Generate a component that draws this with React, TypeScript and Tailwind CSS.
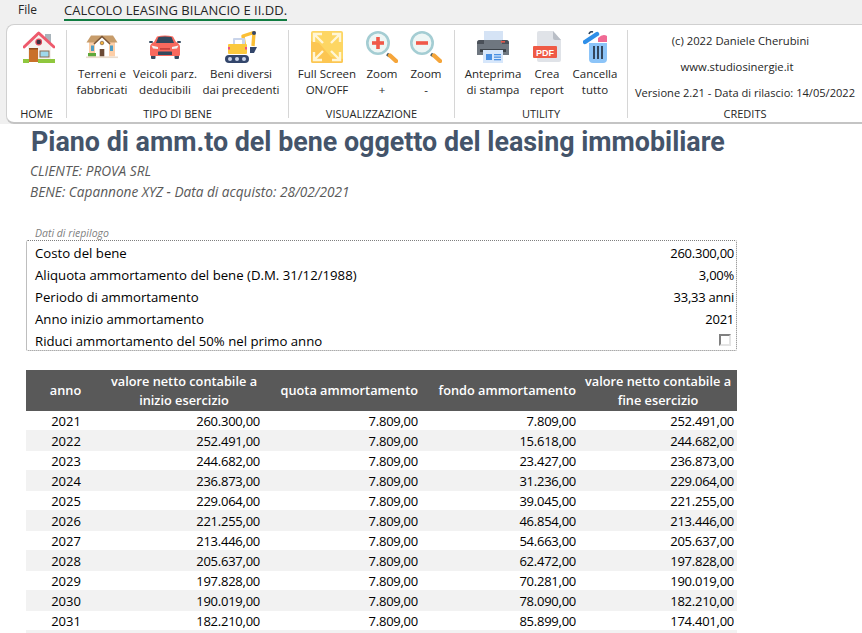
import type { ReactNode } from "react";

const rows = [
  ["2021", "260.300,00", "7.809,00", "7.809,00", "252.491,00"],
  ["2022", "252.491,00", "7.809,00", "15.618,00", "244.682,00"],
  ["2023", "244.682,00", "7.809,00", "23.427,00", "236.873,00"],
  ["2024", "236.873,00", "7.809,00", "31.236,00", "229.064,00"],
  ["2025", "229.064,00", "7.809,00", "39.045,00", "221.255,00"],
  ["2026", "221.255,00", "7.809,00", "46.854,00", "213.446,00"],
  ["2027", "213.446,00", "7.809,00", "54.663,00", "205.637,00"],
  ["2028", "205.637,00", "7.809,00", "62.472,00", "197.828,00"],
  ["2029", "197.828,00", "7.809,00", "70.281,00", "190.019,00"],
  ["2030", "190.019,00", "7.809,00", "78.090,00", "182.210,00"],
  ["2031", "182.210,00", "7.809,00", "85.899,00", "174.401,00"],
];

const summary = [
  ["Costo del bene", "260.300,00"],
  ["Aliquota ammortamento del bene (D.M. 31/12/1988)", "3,00%"],
  ["Periodo di ammortamento", "33,33 anni"],
  ["Anno inizio ammortamento", "2021"],
];

const HomeIcon = () => (
  <svg width="32" height="32" viewBox="0 0 32 32">
    <rect x="22" y="3" width="6" height="10" fill="#a9b4bb" />
    <path d="M15.7 2 L28 14 V31 H5 V14 Z" fill="#f5f1ee" />
    <rect x="6" y="17" width="9" height="14" fill="#c9702a" />
    <rect x="6" y="17" width="9" height="1.5" fill="#8f4a1c" />
    <rect x="17" y="20" width="9" height="6" fill="#9fd8ec" stroke="#8a6a50" />
    <rect x="0" y="28" width="6" height="4" fill="#8fc73e" />
    <rect x="15" y="28" width="17" height="4" fill="#8fc73e" />
    <path d="M1 16 L15.7 2 L31 16" fill="none" stroke="#ee5a6c" strokeWidth="3" strokeLinejoin="round" strokeLinecap="round" />
    <circle cx="15.7" cy="11" r="2.8" fill="#3b3140" stroke="#e0485a" strokeWidth="1.2" />
  </svg>
);

const HouseIcon = () => (
  <svg width="32" height="24" viewBox="0 0 32 24">
    <rect x="3" y="7" width="26" height="14.5" fill="#fdcfa8" />
    <path d="M5 0.5 H27 L31.5 7.5 H0.5 Z" fill="#c79c6a" />
    <path d="M16 1.5 L23 8 V21.5 H9 V8 Z" fill="#fff" />
    <path d="M8 9 L16 1.5 L24 9" fill="none" stroke="#7a5536" strokeWidth="1.6" />
    <circle cx="16" cy="8" r="1.8" fill="#f3b33a" stroke="#6b4a35" strokeWidth="0.6" />
    <rect x="13.7" y="14" width="4.6" height="7.5" fill="#6b4a35" />
    <rect x="5" y="10.5" width="3" height="5.5" fill="#4f9ec4" />
    <rect x="24" y="10.5" width="3" height="5.5" fill="#4f9ec4" />
    <rect x="2" y="18" width="8" height="3.5" fill="#5fa83c" />
    <rect x="0" y="21.5" width="32" height="1.6" fill="#eadccd" />
  </svg>
);

const CarIcon = () => (
  <svg width="32" height="24" viewBox="0 0 32 24">
    <rect x="2" y="19" width="4.5" height="5" rx="1" fill="#34495e" />
    <rect x="25.5" y="19" width="4.5" height="5" rx="1" fill="#34495e" />
    <rect x="0" y="6" width="4" height="2" rx="1" fill="#34495e" />
    <rect x="28" y="6" width="4" height="2" rx="1" fill="#34495e" />
    <path d="M8 1.5 Q16 -0.5 24 1.5 L27 7 Q31 9 31 12 V20 Q31 21 29 21 H3 Q1 21 1 20 V12 Q1 9 5 7 Z" fill="#f8695e" />
    <path d="M9.5 2 Q16 0.8 22.5 2 L25 8 H7 Z" fill="#34495e" />
    <path d="M2.5 10.5 L9 12 V14 L4 13.5 Z" fill="#f2f2f2" />
    <path d="M29.5 10.5 L23 12 V14 L28 13.5 Z" fill="#f2f2f2" />
    <rect x="11" y="13" width="10" height="1.8" fill="#c9433c" />
    <rect x="9" y="16.5" width="14" height="3.5" rx="0.6" fill="#34495e" />
  </svg>
);

const ExcavatorIcon = () => (
  <svg width="33" height="32" viewBox="0 0 33 32">
    <path d="M20 18 L18 5 L29 1.5 L28 15" fill="none" stroke="#fbbf35" strokeWidth="3.4" strokeLinejoin="round" />
    <circle cx="29" cy="2" r="2" fill="#33466b" />
    <path d="M25 16 H32 L29 22 H25 Z" fill="#33466b" />
    <rect x="8" y="7" width="12" height="9" rx="1" fill="#c9d4ea" />
    <rect x="10" y="9" width="7" height="6" fill="#fff" />
    <rect x="3" y="13" width="19" height="10" rx="1" fill="#fbc93d" />
    <rect x="3" y="16" width="2" height="2.5" fill="#ec4f85" />
    <rect x="20" y="16" width="2" height="2.5" fill="#ec4f85" />
    <rect x="0" y="24" width="24" height="8" rx="4" fill="#33466b" />
    <circle cx="5" cy="28" r="2" fill="#c9d4ea" />
    <circle cx="12" cy="28" r="2" fill="#c9d4ea" />
    <circle cx="19" cy="28" r="2" fill="#c9d4ea" />
  </svg>
);

const FullScreenIcon = () => (
  <svg width="32" height="32" viewBox="0 0 32 32">
    <rect width="32" height="32" rx="2" fill="#fdd663" />
    <path d="M0 10 L8 12 L20 26 L32 28 V30 Q32 32 30 32 H2 Q0 32 0 30 Z" fill="#fcc652" />
    <g fill="none" stroke="#fff6d6" strokeWidth="2.4">
      <path d="M3 11 V3 H11 M3 3 L12 12" />
      <path d="M21 3 H29 V11 M29 3 L20 12" />
      <path d="M3 21 V29 H11 M3 29 L12 20" />
      <path d="M29 21 V29 H21 M29 29 L20 20" />
    </g>
  </svg>
);

const ZoomIcon = ({ plus }: { plus?: boolean }) => (
  <svg width="32" height="32" viewBox="0 0 32 32">
    <path d="M21 23 L23.5 25" stroke="#3f5560" strokeWidth="3" />
    <path d="M24 24.5 L30 30" stroke="#f5a53a" strokeWidth="4.4" strokeLinecap="round" />
    <circle cx="12" cy="12" r="10.7" fill="#eef6f5" stroke="#a4cdd3" strokeWidth="2.6" />
    <rect x="6" y="10.2" width="12" height="3.6" fill="#f0594a" />
    {plus && <rect x="10.2" y="6" width="3.6" height="12" fill="#f0594a" />}
  </svg>
);

const PrinterIcon = () => (
  <svg width="32" height="32" viewBox="0 0 32 32">
    <rect x="7" y="0" width="19" height="12" fill="#d5e3f5" />
    <path d="M0 12 Q0 9 3 9 H29 Q32 9 32 12 V24 H0 Z" fill="#6f7780" />
    <path d="M0 12 Q0 9 3 9 H7 V13 H0 Z M25 9 H29 Q32 9 32 12 V13 H25 Z" fill="#4a5058" />
    <rect x="24" y="10" width="4" height="1.6" fill="#e4574a" />
    <rect x="3" y="18" width="26" height="3" fill="#3c4248" />
    <rect x="6" y="19" width="20" height="13" fill="#d7e7fb" />
    <rect x="9" y="23" width="6" height="6" fill="#4a90e2" />
    <rect x="17" y="23" width="7" height="1.3" fill="#4a90e2" />
    <rect x="17" y="25.5" width="7" height="1.3" fill="#4a90e2" />
    <rect x="17" y="28" width="7" height="1.3" fill="#4a90e2" />
  </svg>
);

const PdfIcon = () => (
  <svg width="28" height="32" viewBox="0 0 28 32">
    <path d="M4 2 Q4 0 6 0 H20 L28 9 V29 Q28 31 26 31 H6 Q4 31 4 29 Z" fill="#e0e3e8" />
    <path d="M20 0 L28 9 H22 Q20 9 20 7 Z" fill="#b9bec6" />
    <rect x="0" y="15" width="24" height="12" rx="1" fill="#ef5a45" />
    <text x="12" y="24.5" textAnchor="middle" fontSize="9" fontWeight="700" fill="#fff" fontFamily="'Liberation Sans', sans-serif">PDF</text>
  </svg>
);

const TrashIcon = () => (
  <svg width="24" height="32" viewBox="0 0 24 32">
    <path d="M6 12 H24 V28 Q24 32 20 32 H10 Q6 32 6 28 Z" fill="#8cc4f8" />
    <path d="M15 7 Q20 2 24 5 V11 H15 Z" fill="#f06a94" />
    <g fill="#33465c">
      <rect x="10" y="15" width="2" height="13" />
      <rect x="14" y="15" width="2" height="13" />
      <rect x="18" y="15" width="2" height="13" />
    </g>
    <path d="M2 11 L14 3" stroke="#2f8fe8" strokeWidth="4.4" strokeLinecap="round" />
    <path d="M6 3 Q7 0 10 1" fill="none" stroke="#33465c" strokeWidth="1.6" />
  </svg>
);

function RibbonButton({ icon, lines, width }: { icon: ReactNode; lines: string[]; width: string }) {
  return (
    <div className={`flex flex-col items-center ${width}`}>
      <div className="flex h-[32px] items-center justify-center">{icon}</div>
      <div className="mt-[3px] whitespace-nowrap text-center text-[11.5px] leading-[16px] text-[#262626]">
        {lines.map((l) => (
          <div key={l}>{l}</div>
        ))}
      </div>
    </div>
  );
}

function RibbonGroup({ label, width, className, children }: { label: string; width: string; className?: string; children: ReactNode }) {
  return (
    <div className={`flex h-full flex-col ${width}`}>
      <div className={`flex flex-1 pt-[6px] ${className ?? ""}`}>{children}</div>
      <div className="h-[16px] text-center text-[11px] leading-[16px] text-[#262626]">{label}</div>
    </div>
  );
}

const Sep = () => <div className="mt-[5px] h-[88px] w-px shrink-0 bg-[#d6d6d6]" />;

export default function App() {
  return (
    <div className="h-screen overflow-hidden bg-white font-['Open_Sans',sans-serif] text-black">
      <div className="bg-[#f0f0f0]">
        <div className="flex h-[24px] items-start leading-[20px] text-[#262626]">
          <span className="ml-[18px] text-[12px]">File</span>
          <span className="ml-[27px] h-[21px] whitespace-nowrap border-b-2 border-[#107c41] text-[13px]">CALCOLO LEASING BILANCIO E II.DD.</span>
        </div>
        <div className="ml-[6px] flex h-[100px] rounded-l-[8px] border-t border-b-2 border-l border-[#d0d0d0] border-b-[#c4c4c4] bg-white">
          <RibbonGroup label="HOME" width="w-[59px]" className="justify-center pl-[4px]">
            <RibbonButton icon={<HomeIcon />} lines={[]} width="w-[40px]" />
          </RibbonGroup>
          <Sep />
          <RibbonGroup label="TIPO DI BENE" width="w-[221px]" className="pl-[5px]">
            <RibbonButton icon={<HouseIcon />} lines={["Terreni e", "fabbricati"]} width="w-[60px]" />
            <RibbonButton icon={<CarIcon />} lines={["Veicoli parz.", "deducibili"]} width="w-[66px]" />
            <RibbonButton icon={<ExcavatorIcon />} lines={["Beni diversi", "dai precedenti"]} width="ml-[1px] w-[84px]" />
          </RibbonGroup>
          <Sep />
          <RibbonGroup label="VISUALIZZAZIONE" width="w-[165px]" className="pl-[5px]">
            <RibbonButton icon={<FullScreenIcon />} lines={["Full Screen", "ON/OFF"]} width="w-[66px]" />
            <RibbonButton icon={<ZoomIcon plus />} lines={["Zoom", "+"]} width="w-[44px]" />
            <RibbonButton icon={<ZoomIcon />} lines={["Zoom", "-"]} width="w-[44px]" />
          </RibbonGroup>
          <Sep />
          <RibbonGroup label="UTILITY" width="w-[172px]" className="pl-[6px]">
            <RibbonButton icon={<PrinterIcon />} lines={["Anteprima", "di stampa"]} width="w-[64px]" />
            <RibbonButton icon={<PdfIcon />} lines={["Crea", "report"]} width="w-[44px]" />
            <RibbonButton icon={<TrashIcon />} lines={["Cancella", "tutto"]} width="w-[52px]" />
          </RibbonGroup>
          <Sep />
          <RibbonGroup label="CREDITS" width="w-[234px]" className="flex-col items-center gap-[10px] pt-[8px]">
            <div className="mr-[9px] text-[11.25px] leading-[16px] text-[#262626]">(c) 2022 Daniele Cherubini</div>
            <div className="mr-[16px] text-[11.25px] leading-[16px] text-[#262626]">www.studiosinergie.it</div>
            <div className="whitespace-nowrap text-[11.1px] leading-[16px] text-[#262626]">Versione 2.21 - Data di rilascio: 14/05/2022</div>
          </RibbonGroup>
        </div>
      </div>

      <div className="w-[711px] ml-[26px]">
        <h1 className="ml-[5px] whitespace-nowrap font-['Roboto',sans-serif] text-[26.85px] font-bold leading-[36px] text-[#44546a]">
          Piano di amm.to del bene oggetto del leasing immobiliare
        </h1>
        <p className="ml-[4px] text-[13.65px] italic leading-[21px] text-[#595959]">CLIENTE: PROVA SRL</p>
        <p className="ml-[4px] text-[13.65px] italic leading-[21px] text-[#595959]">BENE: Capannone XYZ - Data di acquisto: 28/02/2021</p>

        <p className="mb-[1px] ml-[9px] mt-[26px] text-[10.5px] italic leading-[11px] text-[#7f7f7f]">Dati di riepilogo</p>
        <div className="h-[111px] rounded-[2px] border border-dotted border-[#7f7f7f] pl-[8px] pr-[2px] pt-[1px] text-[13.2px] leading-[22px]">
          {summary.map(([label, value]) => (
            <div key={label} className="flex justify-between">
              <span>{label}</span>
              <span className="text-[13px] tracking-[-0.25px]">{value}</span>
            </div>
          ))}
          <div className="flex items-center justify-between">
            <span>Riduci ammortamento del 50% nel primo anno</span>
            <span className="mb-[2px] mr-[3px] h-[12px] w-[12px] border-2 border-t-[#808080] border-l-[#808080] border-r-[#e4e4e4] border-b-[#e4e4e4] bg-white" />
          </div>
        </div>

        <table className="mt-[19px] w-[711px] table-fixed text-[13px]">
          <colgroup>
            <col className="w-[79px]" />
            <col className="w-[158px]" />
            <col className="w-[158px]" />
            <col className="w-[158px]" />
            <col className="w-[158px]" />
          </colgroup>
          <thead>
            <tr className="h-[41px] bg-[#595959] text-[12.75px] leading-[19px] text-white">
              <th className="font-semibold">anno</th>
              <th className="font-semibold">valore netto contabile a<br />inizio esercizio</th>
              <th className="pr-[3px] text-right font-semibold whitespace-nowrap">quota ammortamento</th>
              <th className="pr-[3px] text-right font-semibold whitespace-nowrap">fondo ammortamento</th>
              <th className="font-semibold">valore netto contabile a<br />fine esercizio</th>
            </tr>
          </thead>
          <tbody>
            {rows.map((r) => (
              <tr key={r[0]} className="h-[19px] leading-[17px] even:h-[21px] even:bg-[#f2f2f2]">
                <td className="pl-[1px] pt-[2px] text-center">{r[0]}</td>
                <td className="pr-[3px] pt-[2px] text-right tracking-[-0.25px]">{r[1]}</td>
                <td className="pr-[3px] pt-[2px] text-right tracking-[-0.25px]">{r[2]}</td>
                <td className="pr-[3px] pt-[2px] text-right tracking-[-0.25px]">{r[3]}</td>
                <td className="pr-[3px] pt-[2px] text-right tracking-[-0.25px]">{r[4]}</td>
              </tr>
            ))}
            <tr className="h-[21px] bg-[#f2f2f2]">
              <td colSpan={5} />
            </tr>
          </tbody>
        </table>
      </div>
    </div>
  );
}
